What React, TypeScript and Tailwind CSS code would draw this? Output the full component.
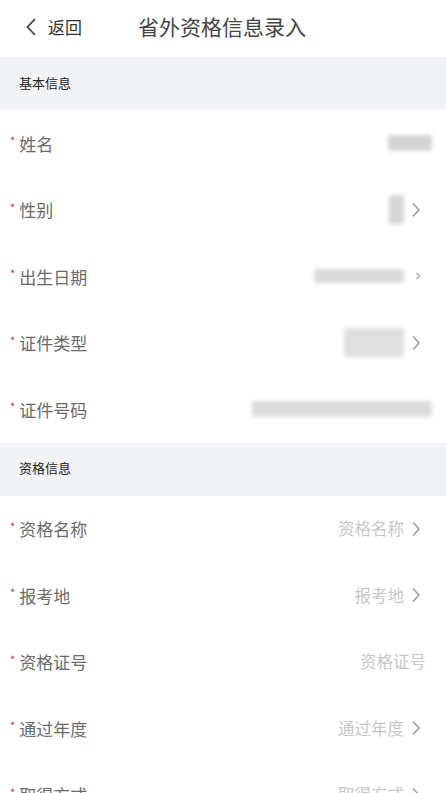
import React from 'react';

const FONT = { fontFamily: '"Noto Sans CJK SC", "Liberation Sans", sans-serif' };

type Row = {
  label: string;
  placeholder?: string;
  blur?: { w: number; h: number; shade: string };
  arrow?: 'big' | 'small' | 'none';
  wide?: boolean;
};

const basic: Row[] = [
  { label: '姓名', blur: { w: 44, h: 16, shade: 'bg-[#cfcfcf]' }, arrow: 'none', wide: true },
  { label: '性别', blur: { w: 15, h: 29, shade: 'bg-[#d2d2d2]' }, arrow: 'big' },
  { label: '出生日期', blur: { w: 90, h: 14, shade: 'bg-[#d6d6d6]' }, arrow: 'small' },
  { label: '证件类型', blur: { w: 60, h: 29, shade: 'bg-[#dcdcdc]' }, arrow: 'big' },
  { label: '证件号码', blur: { w: 180, h: 16, shade: 'bg-[#d8d8d8]' }, arrow: 'none', wide: true },
];

const qual: Row[] = [
  { label: '资格名称', placeholder: '资格名称', arrow: 'big' },
  { label: '报考地', placeholder: '报考地', arrow: 'big' },
  { label: '资格证号', placeholder: '资格证号', arrow: 'none', wide: true },
  { label: '通过年度', placeholder: '通过年度', arrow: 'big' },
  { label: '取得方式', placeholder: '取得方式', arrow: 'big' },
];

const Chevron = ({ small }: { small?: boolean }) =>
  small ? (
    <svg width="6" height="10" viewBox="0 0 6 10" className="ml-[11px]">
      <path d="M1.5 2 L4.5 5 L1.5 8" fill="none" stroke="#a8a8a8" strokeWidth="1.2" />
    </svg>
  ) : (
    <svg width="10" height="16" viewBox="0 0 10 16" className="ml-[7px]">
      <path d="M2 1.5 L8 8 L2 14.5" fill="none" stroke="#9a9a9a" strokeWidth="1.5" />
    </svg>
  );

const FormRow = ({ row }: { row: Row }) => (
  <div className="flex h-[66.5px] items-center justify-between bg-white pl-[10px]">
    <div className="flex items-center text-[17px] text-[#6b6b6b]">
      <span className="mr-[4px] -mt-[6px] text-[11px] text-[#b5404f]">*</span>
      {row.label}
    </div>
    <div className={`flex items-center ${row.wide ? 'pr-[14px]' : 'pr-[25px]'}`}>
      {row.blur && (
        <div
          className={`${row.blur.shade} rounded-[2px] blur-[2px] opacity-90`}
          style={{ width: row.blur.w, height: row.blur.h }}
        />
      )}
      {row.placeholder && (
        <span className={`text-[16.5px] text-[#c8c8c8] ${row.wide ? 'mr-[6px]' : ''}`}>{row.placeholder}</span>
      )}
      {row.arrow === 'big' && <Chevron />}
      {row.arrow === 'small' && <Chevron small />}
    </div>
  </div>
);

const SectionTitle = ({ title }: { title: string }) => (
  <div className="flex h-[53px] items-center bg-[#f1f3f6] pb-[2px] pl-[19px] text-[13px] text-[#222]">{title}</div>
);

export default function App() {
  return (
    <div className="h-[793px] w-[446px] overflow-hidden bg-white" style={FONT}>
      <div className="flex h-[57px] items-center bg-white pb-[3px]">
        <div className="flex items-center pl-[25px] text-[17px] text-[#333]">
          <svg width="12" height="20" viewBox="0 0 12 20" className="mr-[11px]">
            <path d="M10 2 L2.5 10 L10 18" fill="none" stroke="#444" strokeWidth="1.8" />
          </svg>
          返回
        </div>
        <div className="ml-[56px] text-[21px] text-[#444]">省外资格信息录入</div>
      </div>
      <SectionTitle title="基本信息" />
      {basic.map((r) => (
        <FormRow key={r.label} row={r} />
      ))}
      <SectionTitle title="资格信息" />
      {qual.map((r) => (
        <FormRow key={r.label} row={r} />
      ))}
    </div>
  );
}
